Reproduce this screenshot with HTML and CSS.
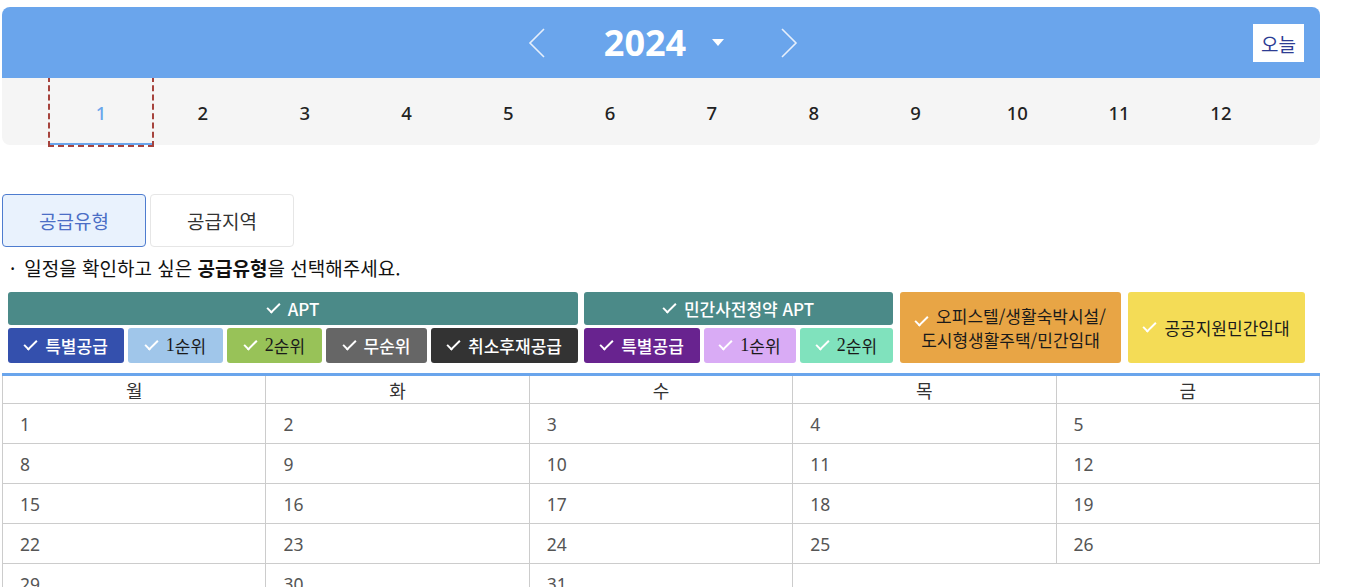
FILE: index.html
```html
<!DOCTYPE html>
<html lang="ko">
<head>
<meta charset="utf-8">
<title>청약 일정</title>
<link rel="stylesheet" href="styles.css">
</head>
<body>
<div class="wrap">
  <div class="yearbar">
    <div class="yearnav">
      <button class="arrow" aria-label="이전">
        <svg width="20" height="32" viewBox="0 0 20 32"><polyline points="17,2 3,16 17,30" fill="none" stroke="#e6effb" stroke-width="1.6"/></svg>
      </button>
      <div class="year">2024</div>
      <span class="caret"></span>
      <button class="arrow" aria-label="다음">
        <svg width="20" height="32" viewBox="0 0 20 32"><polyline points="3,2 17,16 3,30" fill="none" stroke="#e6effb" stroke-width="1.6"/></svg>
      </button>
    </div>
    <button class="today">오늘</button>
  </div>
  <div class="months">
    <div class="month active">1</div>
    <div class="month">2</div>
    <div class="month">3</div>
    <div class="month">4</div>
    <div class="month">5</div>
    <div class="month">6</div>
    <div class="month">7</div>
    <div class="month">8</div>
    <div class="month">9</div>
    <div class="month">10</div>
    <div class="month">11</div>
    <div class="month">12</div>
  </div>

  <div class="tabs">
    <div class="tab active">공급유형</div>
    <div class="tab">공급지역</div>
  </div>
  <p class="guide"><span class="dot">·</span>일정을 확인하고 싶은 <b>공급유형</b>을 선택해주세요.</p>

  <div class="legend">
    <div class="group g-apt">
      <div class="chip c-teal"><i class="ck"></i>APT</div>
      <div class="subrow">
        <div class="chip w116 c-blue"><i class="ck"></i>특별공급</div>
        <div class="chip w95 c-sky dark"><i class="ck"></i><span class="num">1</span>순위</div>
        <div class="chip w95 c-green dark"><i class="ck"></i><span class="num">2</span>순위</div>
        <div class="chip w101 c-gray"><i class="ck"></i>무순위</div>
        <div class="chip w147 c-black"><i class="ck"></i>취소후재공급</div>
      </div>
    </div>
    <div class="group g-pre">
      <div class="chip c-teal"><i class="ck"></i>민간사전청약 APT</div>
      <div class="subrow">
        <div class="chip w116 c-purple"><i class="ck"></i>특별공급</div>
        <div class="chip w92 c-lilac dark"><i class="ck"></i><span class="num">1</span>순위</div>
        <div class="chip w93 c-mint dark"><i class="ck"></i><span class="num">2</span>순위</div>
      </div>
    </div>
    <div class="chip tall w221 c-orange dark"><span><i class="ck"></i>오피스텔/생활숙박시설/<br>도시형생활주택/민간임대</span></div>
    <div class="chip tall w177 c-yellow dark"><i class="ck"></i>공공지원민간임대</div>
  </div>

  <table class="cal">
    <thead>
      <tr><th>월</th><th>화</th><th>수</th><th>목</th><th>금</th></tr>
    </thead>
    <tbody>
      <tr><td>1</td><td>2</td><td>3</td><td>4</td><td>5</td></tr>
      <tr><td>8</td><td>9</td><td>10</td><td>11</td><td>12</td></tr>
      <tr><td>15</td><td>16</td><td>17</td><td>18</td><td>19</td></tr>
      <tr><td>22</td><td>23</td><td>24</td><td>25</td><td>26</td></tr>
      <tr><td>29</td><td>30</td><td>31</td></tr>
    </tbody>
  </table>
</div>
</body>
</html>
```

FILE: styles.css
```css
* { box-sizing: border-box; }
html, body { margin: 0; padding: 0; background: #fff; }
body {
  font-family: "Noto Sans", "Noto Sans CJK KR", sans-serif;
  color: #222;
  overflow: hidden;
}
.wrap {
  width: 1318px;
  margin: 7px 0 0 2px;
}
.yearbar {
  height: 71px;
  background: #6aa5ec;
  border-radius: 8px 8px 0 0;
  display: flex;
  align-items: center;
  justify-content: center;
  position: relative;
}
.yearnav {
  display: flex;
  align-items: center;
  margin-left: 4px;
}
.arrow {
  background: none;
  border: 0;
  padding: 0;
  width: 20px;
  height: 32px;
  display: flex;
  cursor: pointer;
}
.year {
  color: #fff;
  font-size: 36px;
  font-weight: 700;
  line-height: 1;
  margin: 0 0 0 57px;
}
.caret {
  width: 0; height: 0;
  border-left: 6px solid transparent;
  border-right: 6px solid transparent;
  border-top: 7px solid #fff;
  margin: 0 55px 0 26px;
}
.today {
  position: absolute;
  right: 16px;
  top: 17px;
  width: 51px;
  height: 38px;
  background: #fff;
  border: 0;
  font-family: "Noto Sans CJK KR", sans-serif;
  font-size: 19px;
  color: #2d3c93;
  padding: 0;
}
.months {
  height: 67px;
  background: #f5f5f5;
  border-radius: 0 0 8px 8px;
  display: flex;
  justify-content: center;
}
.month {
  width: 101.8px;
  display: flex;
  align-items: center;
  justify-content: center;
  font-size: 18.5px;
  font-weight: 500;
  color: #222;
  padding-top: 1px;
}
.month.active {
  color: #6aa5ec;
  border-bottom: 2px solid #6aa5ec;
  outline: 2px dashed #a6433d;
  padding-top: 3px;
}
.tabs {
  display: flex;
  gap: 4px;
  margin-top: 49px;
}
.tab {
  width: 144px;
  height: 53px;
  border: 1px solid #e6e6e6;
  border-radius: 4px;
  display: flex;
  align-items: center;
  justify-content: center;
  font-family: "Noto Sans CJK KR", sans-serif;
  font-size: 19px;
  color: #333;
  background: #fff;
}
.tab.active {
  background: #e9f2fd;
  border-color: #4e7ccf;
  color: #4b6ec6;
}
.guide {
  margin: 6px 0 0 0;
  font-family: "Noto Sans CJK KR", sans-serif;
  font-size: 19px;
  line-height: 29px;
  color: #111;
  padding-left: 8px;
}
.guide .dot { margin-right: 9px; }
.guide b { font-weight: 700; }
.legend {
  display: flex;
  gap: 7px;
  margin: 10px 0 0 6px;
  align-items: stretch;
}
.group {
  display: flex;
  flex-direction: column;
  gap: 3px;
}
.g-apt { width: 570px; margin-right: -1px; }
.g-pre { width: 309px; }
.subrow {
  display: flex;
  gap: 4px;
}
.chip {
  height: 33px;
  border-radius: 3px;
  display: flex;
  align-items: center;
  justify-content: center;
  font-family: "Noto Sans CJK KR", sans-serif;
  font-size: 17px;
  font-weight: 500;
  color: #fff;
  white-space: nowrap;
}
.subrow .chip { height: 35px; }
.chip.dark { color: #1a1a1a; font-weight: 400; }
.chip.tall {
  height: 71px;
  line-height: 24px;
  text-align: center;
}
.num {
  font-family: "Liberation Serif", serif;
  font-size: 18px;
}
.ck {
  display: inline-block;
  width: 13px;
  height: 7px;
  border-left: 2.5px solid #fff;
  border-bottom: 2.5px solid #fff;
  transform: rotate(-45deg);
  margin: -5px 8px 0 0;
}
.w92 { flex: 0 0 92px; }
.w93 { flex: 0 0 93px; }
.w95 { flex: 0 0 95px; }
.w101 { flex: 0 0 101px; }
.w116 { flex: 0 0 116px; }
.w147 { flex: 0 0 147px; }
.w221 { flex: 0 0 221px; }
.w177 { flex: 0 0 177px; }
.c-teal { background: #4b8a88; }
.c-blue { background: #3450ad; }
.c-sky { background: #a0c6ea; }
.c-green { background: #98c258; }
.c-gray { background: #666666; }
.c-black { background: #333333; }
.c-purple { background: #68238f; }
.c-lilac { background: #d9abf5; }
.c-mint { background: #80e2bd; }
.c-orange { background: #e8a545; }
.c-yellow { background: #f4dc56; }
.cal {
  width: 1318px;
  border-collapse: collapse;
  margin-top: 10px;
  border-top: 3px solid #6aa5ec;
  table-layout: fixed;
}
.cal th {
  height: 29px;
  border: 1px solid #cccccc;
  border-top: 0;
  font-family: "Noto Sans CJK KR", sans-serif;
  font-weight: 400;
  font-size: 18px;
  color: #333;
  padding: 0;
  line-height: 26px;
}
.cal td {
  height: 40px;
  border: 1px solid #cccccc;
  padding: 0 0 0 17px;
  font-size: 17.5px;
  color: #555;
  vertical-align: middle;
}
```
